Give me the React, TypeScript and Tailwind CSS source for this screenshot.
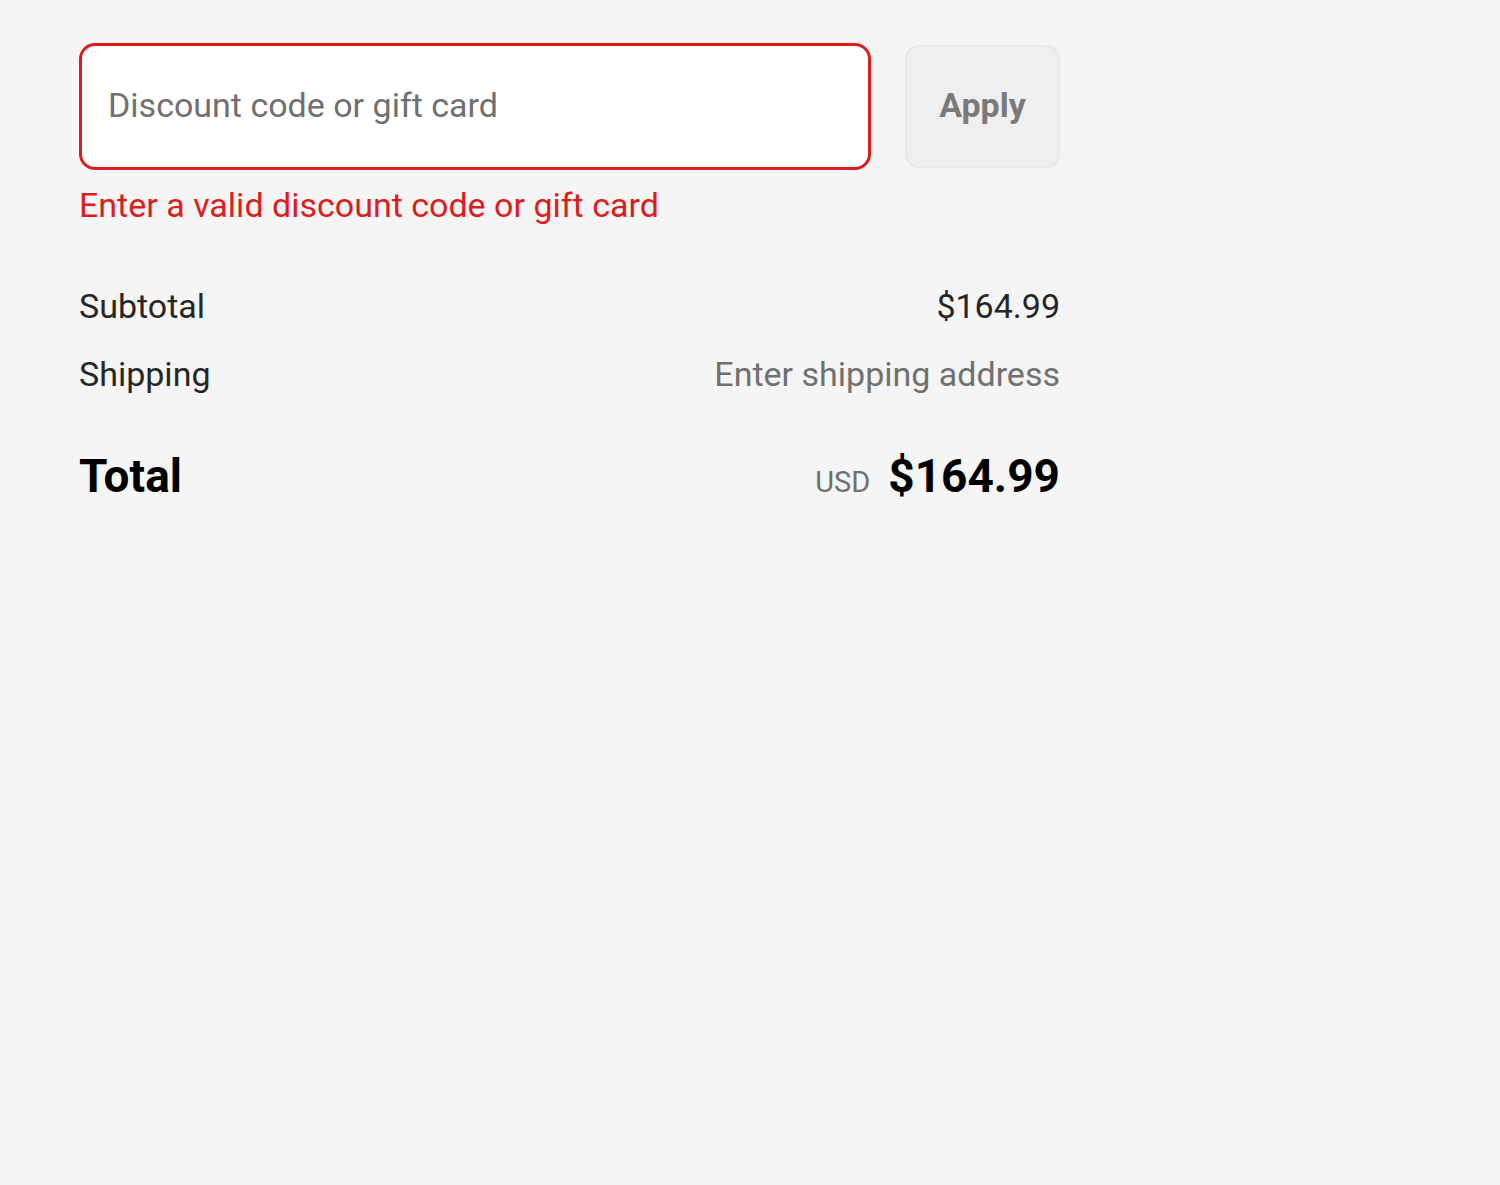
export default function App() {
  return (
    <div
      className="min-h-[1185px] w-full bg-[#f5f5f5] text-[#1a1a1a]"
      style={{ fontFamily: 'Roboto, "Liberation Sans", sans-serif' }}
    >
      <div className="w-[1060px] pl-[79px] pt-[43px]">
        {/* Discount row */}
        <div className="flex items-start gap-[34px]">
          <div className="flex-1">
            <input
              type="text"
              placeholder="Discount code or gift card"
              className="h-[127px] w-full rounded-[16px] border-[3px] border-[#dd1d1d] bg-white px-[26px] pb-[3px] text-[34px] text-[#1a1a1a] outline-none placeholder:text-[#707070]"
            />
            <p className="mt-[16px] text-[34px] leading-[38px] text-[#dd1d1d]">
              Enter a valid discount code or gift card
            </p>
          </div>
          <button className="mt-[2px] h-[123px] w-[155px] rounded-[14px] border-[2px] border-[#e8e8e8] bg-[#efefef] pb-[2px] text-[34px] font-bold text-[#7a7a7a]">
            Apply
          </button>
        </div>

        {/* Summary */}
        <div className="mt-[62px] flex flex-col">
          <div className="flex items-center justify-between text-[34px] leading-[40px]">
            <span className="text-[#262626]">Subtotal</span>
            <span className="text-[#262626]">$164.99</span>
          </div>
          <div className="mt-[28px] flex items-center justify-between text-[34px] leading-[40px]">
            <span className="text-[#262626]">Shipping</span>
            <span className="text-[#707070]">Enter shipping address</span>
          </div>
          <div className="mt-[54px] flex items-center justify-between">
            <span className="text-[46px] font-bold leading-[56px] text-black">Total</span>
            <span className="flex items-baseline gap-[18px]">
              <span className="text-[29px] text-[#707070]">USD</span>
              <span className="text-[46px] font-bold leading-[56px] text-black">$164.99</span>
            </span>
          </div>
        </div>
      </div>
    </div>
  )
}
